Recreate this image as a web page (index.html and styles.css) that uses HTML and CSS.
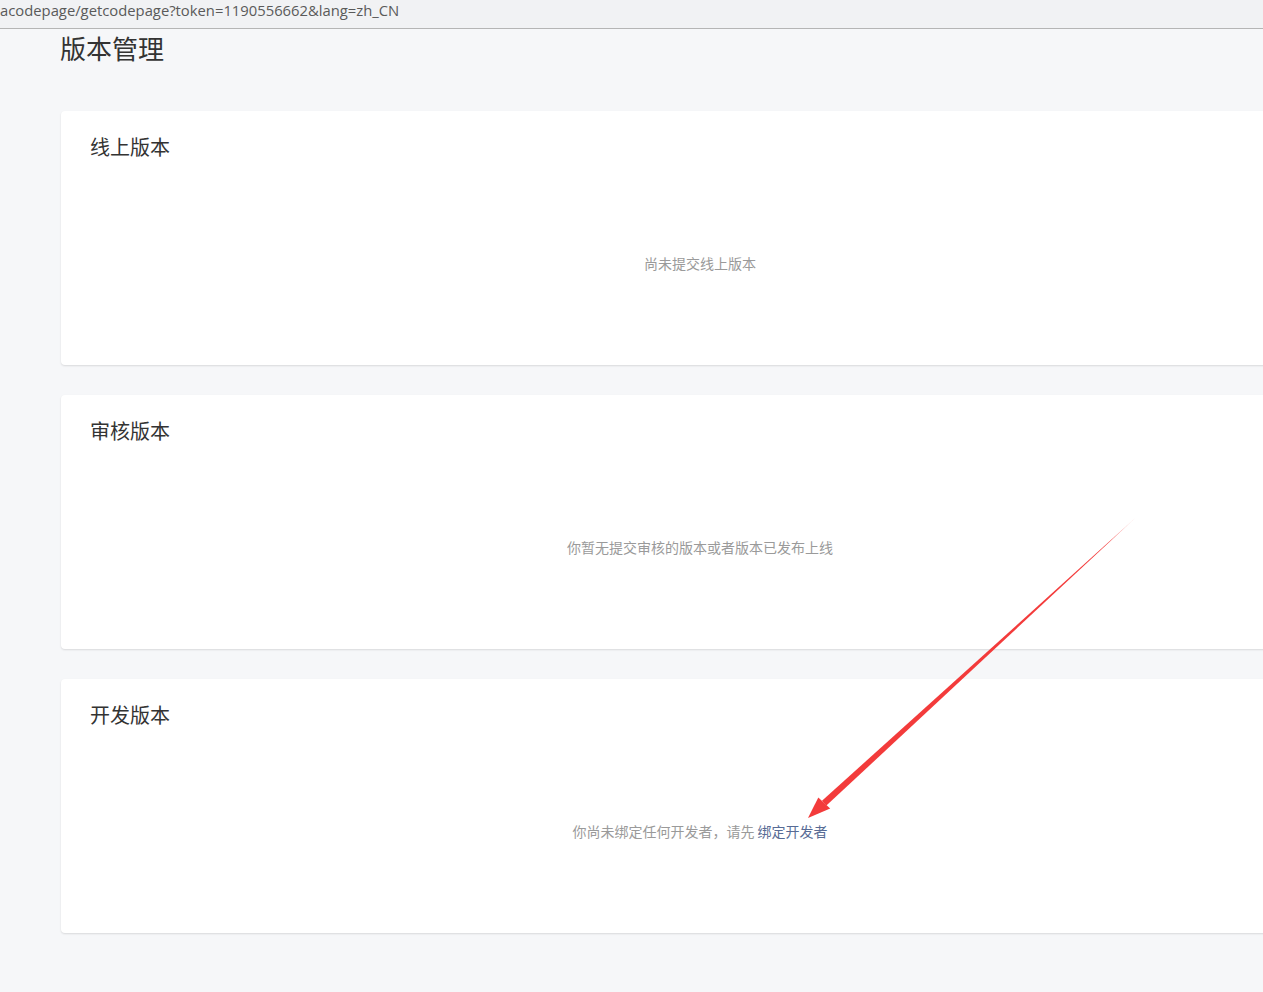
FILE: index.html
```html
<!DOCTYPE html>
<html lang="zh-CN">
<head>
<meta charset="utf-8">
<link rel="stylesheet" href="styles.css">
</head>
<body>
<div class="urlbar">acodepage/getcodepage?token=1190556662&amp;lang=zh_CN</div>
<main class="page">
  <h1 class="page-title">版本管理</h1>
  <section class="card">
    <h2 class="card-title">线上版本</h2>
    <div class="card-body">尚未提交线上版本</div>
  </section>
  <section class="card">
    <h2 class="card-title">审核版本</h2>
    <div class="card-body">你暂无提交审核的版本或者版本已发布上线</div>
  </section>
  <section class="card">
    <h2 class="card-title">开发版本</h2>
    <div class="card-body">你尚未绑定任何开发者，请先&nbsp;<a class="link" href="#">绑定开发者</a></div>
  </section>
</main>
<svg class="arrow" width="1263" height="992" viewBox="0 0 1263 992">
  <defs>
    <linearGradient id="fade" gradientUnits="userSpaceOnUse" x1="1135" y1="518" x2="808" y2="818">
      <stop offset="0" stop-color="#f33b3b" stop-opacity="0.3"/>
      <stop offset="0.08" stop-color="#f33b3b" stop-opacity="1"/>
      <stop offset="1" stop-color="#f33b3b" stop-opacity="1"/>
    </linearGradient>
  </defs>
  <polygon fill="url(#fade)" points="1135.8,517.6 822,800.8 826.4,805.6"/>
  <polygon fill="#f33b3b" points="808,818 818.3,797.6 830.2,808.4"/>
</svg>
</body>
</html>
```
FILE: styles.css
```css
html, body {
  margin: 0;
  padding: 0;
}
body {
  background: #f6f7f9;
  font-family: "Noto Sans CJK SC", "Noto Sans", sans-serif;
  color: #333;
  width: 1263px;
  height: 992px;
  overflow: hidden;
  position: relative;
}
.urlbar {
  height: 28px;
  background: #f1f2f4;
  border-bottom: 1px solid #b5b5b5;
  font-family: "Open Sans", "Noto Sans", sans-serif;
  font-size: 14.8px;
  line-height: 21px;
  color: #5a5a5a;
  white-space: nowrap;
}
.page {
  padding: 0 0 0 61px;
  display: flex;
  flex-direction: column;
  gap: 30px;
}
.page-title {
  margin: 1px 0 15px -1px;
  font-size: 26px;
  font-weight: normal;
  line-height: 36px;
  color: #333;
}
.card {
  width: 1278px;
  height: 254px;
  background: #fff;
  border-radius: 4px;
  box-shadow: 0 1px 2px rgba(0, 0, 0, 0.12);
  box-sizing: border-box;
  padding: 21px 29px 0;
  display: flex;
  flex-direction: column;
}
.card-title {
  margin: 0;
  font-size: 20px;
  font-weight: normal;
  line-height: 30px;
  color: #333;
}
.card-body {
  flex: 1;
  display: flex;
  align-items: center;
  justify-content: center;
  font-size: 14px;
  color: #9a9a9a;
  margin-left: -29px;
  margin-right: -29px;
  padding-bottom: 2px;
}
.link {
  color: #576b95;
  text-decoration: none;
}
.arrow {
  position: absolute;
  left: 0;
  top: 0;
  pointer-events: none;
}
```
